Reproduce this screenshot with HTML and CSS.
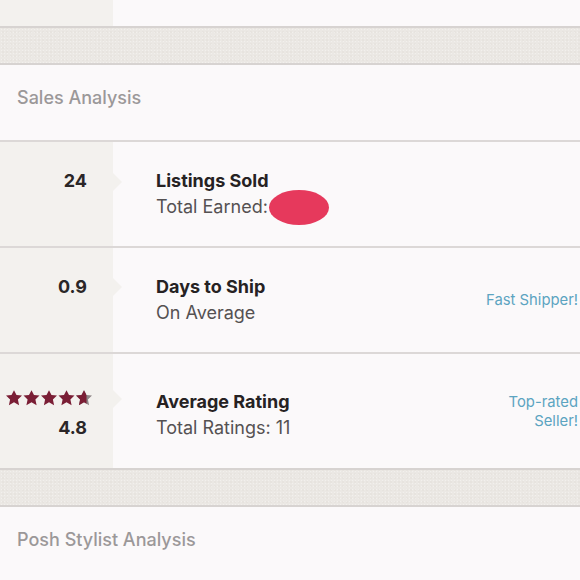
FILE: index.html
```html
<!DOCTYPE html>
<html>
<head>
<meta charset="utf-8">
<link rel="stylesheet" href="styles.css">
</head>
<body>
<div class="page">
  <div class="top-stub"><div class="stub-left"></div><div class="stub-right"></div></div>
  <div class="band"></div>
  <div class="section-head">Sales Analysis</div>
  <div class="row row-a">
    <div class="metric"><span class="num">24</span></div>
    <div class="info">
      <div class="texts">
        <div class="title">Listings Sold</div>
        <div class="sub">Total Earned:<span class="blot"></span></div>
      </div>
    </div>
  </div>
  <div class="row row-b">
    <div class="metric"><span class="num">0.9</span></div>
    <div class="info">
      <div class="texts">
        <div class="title">Days to Ship</div>
        <div class="sub">On Average</div>
      </div>
      <div class="badge">Fast Shipper!</div>
    </div>
  </div>
  <div class="row row-c">
    <div class="metric metric-rating">
      <div class="stars">
        <svg width="86" height="16" viewBox="0 0 86 16">
          <defs>
            <path id="st" d="M8 0.2 L10.5 5.1 L16 5.6 L11.9 9.4 L13.1 15.2 L8 12.3 L2.9 15.2 L4.1 9.4 L0 5.6 L5.5 5.1 Z"/>
            <clipPath id="part"><rect x="0" y="0" width="10.5" height="16"/></clipPath>
          </defs>
          <use href="#st" x="0" fill="#7a1e35"/>
          <use href="#st" x="17.5" fill="#7a1e35"/>
          <use href="#st" x="35" fill="#7a1e35"/>
          <use href="#st" x="52.5" fill="#7a1e35"/>
          <use href="#st" x="70" fill="#8d8587"/>
          <g clip-path="url(#part)" transform="translate(70 0)"><use href="#st" fill="#7a1e35"/></g>
        </svg>
      </div>
      <span class="num">4.8</span>
    </div>
    <div class="info">
      <div class="texts">
        <div class="title">Average Rating</div>
        <div class="sub">Total Ratings: 11</div>
      </div>
      <div class="badge">Top-rated<br>Seller!</div>
    </div>
  </div>
  <div class="band"></div>
  <div class="section-head section-head-b">Posh Stylist Analysis</div>
</div>
</body>
</html>
```
FILE: styles.css
```css
* { box-sizing: border-box; }
html, body { margin: 0; padding: 0; }
body {
  background: #fbf9fa;
  font-family: "Inter", "Lato", "Liberation Sans", sans-serif;
  width: 580px;
  height: 580px;
  overflow: hidden;
}
.page { display: flex; flex-direction: column; }
.top-stub { display: grid; grid-template-columns: 113px 1fr; height: 26px; }
.stub-left { background: #f3f1ee; }
.stub-right { background: #fbf9fa; }
.band {
  height: 39px;
  background-color: #ebe8e4;
  background-image: radial-gradient(rgba(255,255,255,0.35) 0.6px, transparent 0.8px),
                    radial-gradient(rgba(180,172,165,0.18) 0.6px, transparent 0.8px);
  background-size: 3px 3px, 4px 4px;
  background-position: 0 0, 1px 2px;
  border-top: 2px solid #d7d3d1;
  border-bottom: 2px solid #d7d3d1;
}
.section-head {
  height: 77px;
  display: flex;
  align-items: center;
  padding-left: 17px;
  padding-bottom: 10px;
  font-size: 18px;
  font-weight: 500;
  color: #9b9899;
  border-bottom: 2px solid #dcd8d7;
}
.section-head-b { border-bottom: none; padding-bottom: 10px; height: 75px; }
.row {
  display: grid;
  grid-template-columns: 113px 1fr;
  border-bottom: 2px solid #dcd8d7;
}
.row-a, .row-b { height: 106px; }
.row-c { height: 114px; border-bottom: none; }
.metric {
  position: relative;
  background: #f3f1ee;
  display: flex;
  flex-direction: column;
  align-items: flex-end;
  justify-content: center;
  padding-right: 26px;
  padding-bottom: 26px;
}
.metric::after {
  content: "";
  position: absolute;
  right: -9px;
  top: 31px;
  border-top: 9px solid transparent;
  border-bottom: 9px solid transparent;
  border-left: 9px solid #f3f1ee;
}
.row-b .metric::after { top: 30px; }
.row-c .metric::after { top: 36px; }
.metric-rating { padding-right: 26px; padding-bottom: 0; padding-top: 6px; gap: 12px; }
.stars { margin-right: -5px; line-height: 0; }
.num {
  font-size: 18px;
  font-weight: 700;
  color: #2a2627;
  line-height: 20px;
}
.info {
  display: flex;
  align-items: flex-start;
  justify-content: space-between;
  padding-left: 43px;
  padding-right: 2px;
  padding-top: 28px;
}
.row-c .info { padding-top: 37px; }
.texts { display: flex; flex-direction: column; gap: 4px; }
.title {
  font-size: 18px;
  font-weight: 700;
  color: #262223;
  line-height: 22px;
}
.sub {
  font-size: 18px;
  color: #555152;
  line-height: 22px;
  display: flex;
  align-items: center;
  height: 22px;
}
.blot {
  display: inline-block;
  width: 60px;
  height: 35px;
  border-radius: 50%;
  background: #e6395c;
  margin-left: 1px;
  margin-top: 0;
  flex: none;
}
.badge {
  font-size: 14.8px;
  color: #5ca4c1;
  text-align: right;
  line-height: 19px;
  margin-top: 15px;
}
.row-c .badge { margin-top: 2px; }
```
